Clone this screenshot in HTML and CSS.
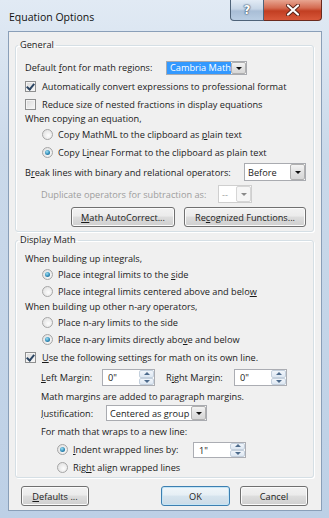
FILE: index.html
```html
<!DOCTYPE html>
<html lang="en">
<head>
    <meta charset="UTF-8">
    <title>Equation Options</title>
    <link rel="stylesheet" href="styles.css">
</head>
<body>
    <div class="window">
        <div class="titlebar">
            <span class="title">Equation Options</span>
            <div class="caption">
                <span class="cap help">?</span>
                <span class="cap close">
                    <svg width="14" height="12" viewBox="0 0 14 12">
                        <path d="M2 1.5 L12 10.5 M12 1.5 L2 10.5" stroke="#5a2318" stroke-width="4" stroke-linecap="round"/>
                        <path d="M2 1.5 L12 10.5 M12 1.5 L2 10.5" stroke="#fff" stroke-width="2.2" stroke-linecap="round"/>
                    </svg>
                </span>
            </div>
        </div>

        <div class="client">
            <fieldset class="group general">
                <legend>General</legend>

                <div class="row h20">
                    <span class="label font-label">Default <u>f</u>ont for math regions:</span>
                    <span class="combo font-combo">
                        <span class="value selected">Cambria Math</span>
                        <span class="arrow"></span>
                    </span>
                </div>
                <div class="row h19">
                    <span class="cb on"></span>
                    <span>Automatically convert expressions to professional format</span>
                </div>
                <div class="row h16">
                    <span class="cb"></span>
                    <span>Reduce size of nested fractions in display equations</span>
                </div>
                <div class="row h13">When copying an equation,</div>
                <div class="row h18 indent-radio">
                    <span class="radio"></span>
                    <span>Copy MathML to the clipboard as <u>p</u>lain text</span>
                </div>
                <div class="row h18 indent-radio">
                    <span class="radio on"></span>
                    <span>Copy L<u>i</u>near Format to the clipboard as plain text</span>
                </div>
                <div class="row h22">
                    <span class="label break-label">B<u>r</u>eak lines with binary and relational operators:</span>
                    <span class="combo before-combo">
                        <span class="value">Before</span>
                        <span class="arrow"></span>
                    </span>
                </div>
                <div class="row h22 indent-text disabled">
                    <span class="label dup-label">Duplicate operators for subtraction as:</span>
                    <span class="combo dup-combo">
                        <span class="value">--</span>
                        <span class="arrow"></span>
                    </span>
                </div>
                <div class="row h24 action-row">
                    <button class="btn autocorrect"><u>M</u>ath AutoCorrect...</button>
                    <button class="btn functions">Re<u>c</u>ognized Functions...</button>
                </div>
            </fieldset>

            <fieldset class="group display">
                <legend>Display Math</legend>

                <div class="row h16">When building up integrals,</div>
                <div class="row h17 indent-radio">
                    <span class="radio on"></span>
                    <span>Place integral limits to the <u>s</u>ide</span>
                </div>
                <div class="row h17 indent-radio">
                    <span class="radio"></span>
                    <span>Place integral limits centered above and belo<u>w</u></span>
                </div>
                <div class="row h13">When building up other n-ary operators,</div>
                <div class="row h18 indent-radio">
                    <span class="radio"></span>
                    <span>Place n-ary limits to the side</span>
                </div>
                <div class="row h17 indent-radio">
                    <span class="radio on"></span>
                    <span>Place n-ary limits directly abo<u>v</u>e and below</span>
                </div>
                <div class="row h19">
                    <span class="cb on"></span>
                    <span><u>U</u>se the following settings for math on its own line.</span>
                </div>
                <div class="row h21 indent-text">
                    <span class="label left-label"><u>L</u>eft Margin:</span>
                    <span class="spin margin-spin">
                        <span class="value">0"</span>
                        <span class="spin-btns"><span class="up"></span><span class="down"></span></span>
                    </span>
                    <span class="label right-label">R<u>i</u>ght Margin:</span>
                    <span class="spin margin-spin">
                        <span class="value">0"</span>
                        <span class="spin-btns"><span class="up"></span><span class="down"></span></span>
                    </span>
                </div>
                <div class="row h16 indent-text">Math margins are added to paragraph margins.</div>
                <div class="row h18 indent-text">
                    <span class="label just-label"><u>J</u>ustification:</span>
                    <span class="combo just-combo">
                        <span class="value">Centered as group</span>
                        <span class="arrow"></span>
                    </span>
                </div>
                <div class="row h19 indent-text">For math that wraps to a new line:</div>
                <div class="row h17 indent-wrap">
                    <span class="radio on"></span>
                    <span class="label indent-label"><u>I</u>ndent wrapped lines by:</span>
                    <span class="spin indent-spin">
                        <span class="value">1"</span>
                        <span class="spin-btns"><span class="up"></span><span class="down"></span></span>
                    </span>
                </div>
                <div class="row h18 indent-wrap">
                    <span class="radio"></span>
                    <span>Rig<u>h</u>t align wrapped lines</span>
                </div>
            </fieldset>

            <div class="footer">
                <button class="btn"><u>D</u>efaults ...</button>
                <button class="btn default push-right">OK</button>
                <button class="btn">Cancel</button>
            </div>
        </div>
    </div>
</body>
</html>
```

FILE: styles.css
```css
* {
    box-sizing: border-box;
}

body {
    margin: 0;
    background: #4c5866;
    font-family: "Open Sans", "Noto Sans", sans-serif;
    font-size: 9.2px;
    color: #1b1b1b;
}

u {
    text-decoration-thickness: 1px;
    text-underline-offset: 1px;
}

.window {
    width: 329px;
    height: 518px;
    display: flex;
    flex-direction: column;
    padding: 0 7px 7px 8px;
    background: linear-gradient(180deg, #e1eaf4 0%, #cad9ea 30%, #bdd0e6 100%);
}

/* title bar */

.titlebar {
    height: 31px;
    display: flex;
    align-items: flex-start;
}

.title {
    margin: 10px 0 0 1px;
    font-size: 10.5px;
    color: #111;
}

.caption {
    margin-left: auto;
    display: flex;
}

.cap {
    height: 21px;
    display: flex;
    align-items: center;
    justify-content: center;
    border: 1px solid #4f6379;
    border-top: none;
}

.help {
    width: 34px;
    border-radius: 0 0 0 4px;
    background: linear-gradient(180deg, #e2ebf5 0%, #c6d5e6 45%, #a9bed6 55%, #b9cde3 100%);
    color: #fff;
    font-family: "DejaVu Sans", sans-serif;
    font-weight: bold;
    font-size: 12px;
    text-shadow: 0 0 1px #3c5068, 0 0 1px #3c5068, 0 0 2px #3c5068;
}

.close {
    width: 58px;
    border-left: none;
    border-color: #6a2a1e;
    border-radius: 0 0 4px 0;
    background: linear-gradient(180deg, #e8a591 0%, #d46a50 40%, #c23e22 55%, #d8583a 100%);
}

/* client area */

.client {
    flex: 1;
    display: flex;
    flex-direction: column;
    padding: 0 7px 0 6px;
    background: #f0f0f0;
    border: 1px solid #8a9fb8;
}

.group {
    margin: 6px 0 0;
    min-width: 0;
    padding: 5px 6px 2px 9px;
    border: 1px solid #d5dfe5;
    border-radius: 3px;
    box-shadow: inset 1px 1px 0 #fff, 1px 1px 0 #fff;
}

.group.display {
    margin-top: 1px;
    padding-top: 3px;
    padding-bottom: 1px;
}

legend {
    margin-left: -7px;
    padding: 0 2px;
    line-height: 14px;
}

.row {
    display: flex;
    align-items: center;
    white-space: nowrap;
}

.h13 { height: 13px; }
.h16 { height: 16px; }
.h17 { height: 17px; }
.h18 { height: 18px; }
.h19 { height: 19px; }
.h20 { height: 20px; }
.h21 { height: 21px; }
.h22 { height: 22px; }
.h24 { height: 24px; }

.indent-radio { padding-left: 17px; }
.indent-text { padding-left: 16px; }
.indent-wrap { padding-left: 32px; }

.disabled { color: #9d9d9d; }

.label { flex: none; overflow: hidden; }
.font-label { flex: 0 0 141px; }
.break-label { flex: 0 0 219px; }
.dup-label { flex: 0 0 177px; }
.left-label { flex: 0 0 61px; }
.right-label { flex: 0 0 68px; margin-left: 11px; }
.just-label { flex: 0 0 65px; }
.indent-label { flex: 0 0 120px; }

/* checkbox and radio */

.cb {
    flex: none;
    width: 11px;
    height: 11px;
    margin-right: 6px;
    border: 1px solid #8e8f8f;
    background: linear-gradient(135deg, #d9d9d9, #f8f8f8);
    box-shadow: inset 0 0 0 1px #f4f4f4;
    position: relative;
}

.cb.on::after {
    content: "";
    position: absolute;
    left: 2px;
    top: 0;
    width: 3px;
    height: 6px;
    border: solid #2b4563;
    border-width: 0 2px 2px 0;
    transform: rotate(40deg);
}

.radio {
    flex: none;
    width: 11px;
    height: 11px;
    margin-right: 5px;
    border: 1px solid #a6a6a6;
    border-radius: 50%;
    background: radial-gradient(circle at 60% 60%, #fdfdfd, #dadada);
    position: relative;
}

.radio.on::after {
    content: "";
    position: absolute;
    left: 2px;
    top: 2px;
    width: 5px;
    height: 5px;
    border-radius: 50%;
    background: radial-gradient(circle at 40% 35%, #9fe0f5, #2a86b3 60%, #1a4f73);
}

/* combo boxes */

.combo {
    flex: none;
    display: flex;
    background: #fff;
    border: 1px solid #a9abb0;
}

.combo .value {
    flex: 1;
    display: flex;
    align-items: center;
    padding-left: 3px;
}

.combo .value.selected {
    background: #3399ff;
    color: #fff;
    padding-left: 3px;
}

.combo .arrow {
    flex: none;
    width: 15px;
    border: 1px solid #b0b0b0;
    border-radius: 2px;
    background: linear-gradient(180deg, #f4f4f4, #e2e2e2 50%, #d6d6d6);
    position: relative;
}

.combo .arrow::after {
    content: "";
    position: absolute;
    left: 50%;
    top: 50%;
    margin: -1px 0 0 -3px;
    border: 3px solid transparent;
    border-top: 3px solid #111;
    border-bottom: none;
}

.font-combo { width: 81px; height: 14px; margin-top: 1px; }
.before-combo { width: 62px; height: 18px; }
.dup-combo { width: 34px; height: 18px; border-color: #cfcfcf; }
.dup-combo .arrow { border-color: #d6d6d6; background: #f6f6f6; }
.dup-combo .arrow::after { border-top-color: #8a8a8a; }
.just-combo { width: 101px; height: 16px; }

/* spin boxes */

.spin {
    flex: none;
    display: flex;
    background: #fff;
    border: 1px solid #abadb3;
}

.spin .value {
    flex: 1;
    padding: 1px 0 0 5px;
}

.spin-btns {
    width: 15px;
    display: flex;
    flex-direction: column;
}

.spin-btns span {
    flex: 1;
    border: 1px solid #c4d0dd;
    border-radius: 2px;
    background: linear-gradient(180deg, #f1f5fa, #dde7f2);
    position: relative;
}

.spin-btns span::after {
    content: "";
    position: absolute;
    left: 50%;
    top: 50%;
    margin: -1px 0 0 -3px;
    border: 3px solid transparent;
    border-bottom: none;
    border-top: 3px solid #4d6b8c;
}

.spin-btns .up::after {
    border-top: none;
    border-bottom: 3px solid #4d6b8c;
    margin-top: -2px;
}

.margin-spin { width: 53px; height: 17px; }
.indent-spin { width: 53px; height: 16px; }

/* buttons */

.btn {
    height: 20px;
    padding: 0;
    font: inherit;
    color: #1b1b1b;
    border: 1px solid #707070;
    border-radius: 3px;
    background: linear-gradient(180deg, #f2f2f2 0%, #ebebeb 45%, #dddddd 50%, #cfcfcf 100%);
    box-shadow: inset 0 0 0 1px #fbfbfb;
}

.action-row { padding-left: 46px; gap: 9px; }
.autocorrect { flex: 0 0 104px; }
.functions { flex: 0 0 122px; }

.footer {
    display: flex;
    margin-top: 8px;
    padding: 0 6px 0 6px;
    gap: 10px;
}

.footer .btn { flex: 0 0 68px; }
.footer .btn.default { flex: 0 0 69px; }

.push-right { margin-left: auto; }

.btn.default {
    border-color: #3c7fb1;
    box-shadow: inset 0 0 0 1px #c4e5f6;
    background: linear-gradient(180deg, #f0f6fa 0%, #e6eff5 45%, #d6e4ee 50%, #cbdbe7 100%);
}
```
